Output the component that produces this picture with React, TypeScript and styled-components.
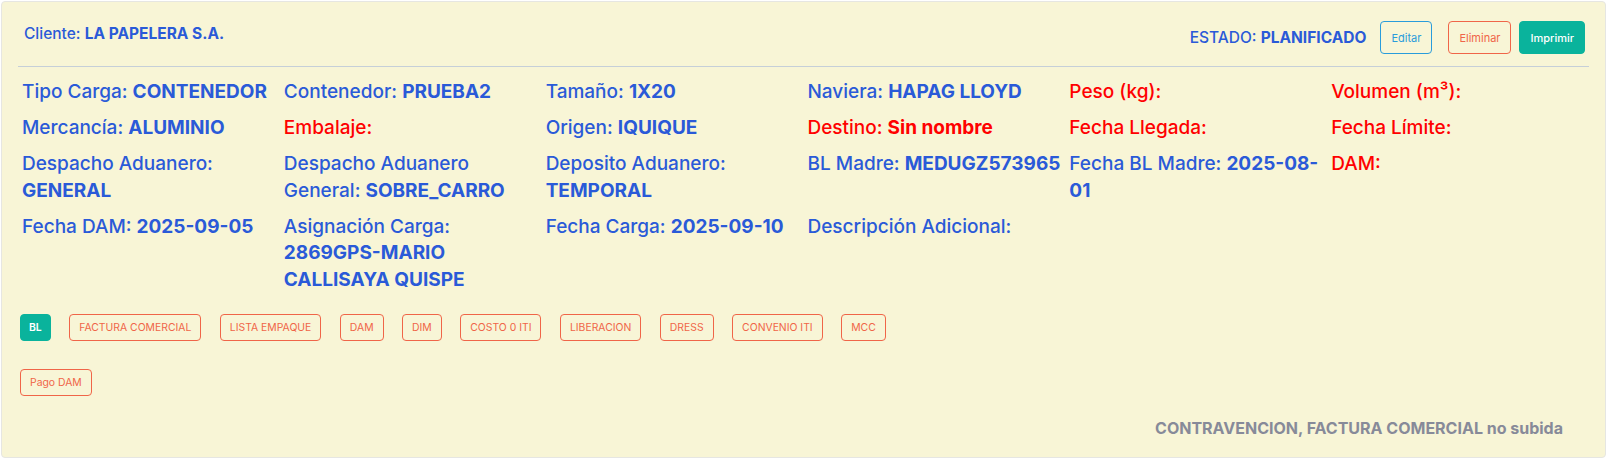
import React from "react";
import styled, { createGlobalStyle } from "styled-components";

const GlobalStyle = createGlobalStyle`
  html, body { margin: 0; padding: 0; background: #ffffff; }
  body { font-family: "Inter", "Noto Sans", sans-serif; }
  * { box-sizing: border-box; }
`;

const Card = styled.div`
  margin: 1px;
  border: 1px solid #e6e6e2;
  border-radius: 4px;
  background: #f8f5d6;
  padding: 19px 16px 18px 16px;
  height: 457px;
`;

const Header = styled.div`
  display: flex;
  justify-content: space-between;
  align-items: center;
  padding: 0 4px 12px 6px;
  border-bottom: 1px solid #c6cfd8;
`;

const HeaderText = styled.div<{ $up?: boolean }>`
  font-size: 15.5px;
  color: #2a5ad8;
  font-weight: 500;
  margin-top: ${(p) => (p.$up ? "-8px" : "0")};
  b { font-weight: 700; }
`;

const Actions = styled.div`
  display: flex;
  align-items: center;
`;

const ActionBtn = styled.button<{ $tone: string; $solid?: boolean; $ml: number }>`
  font-family: inherit;
  height: 33px;
  padding: 0 10px;
  margin-left: ${(p) => p.$ml}px;
  font-size: 11px;
  border-radius: 4px;
  border: 1px solid ${(p) => p.$tone};
  background: ${(p) => (p.$solid ? p.$tone : "transparent")};
  color: ${(p) => (p.$solid ? "#ffffff" : p.$tone)};
  font-weight: ${(p) => (p.$solid ? 500 : 400)};
`;

const Grid = styled.div`
  display: grid;
  grid-template-columns: repeat(6, 1fr);
  row-gap: 9.4px;
  margin-top: 12px;
`;

const Field = styled.div<{ $missing?: boolean }>`
  padding: 0 0 0 4px;
  font-size: 19px;
  line-height: 26.6px;
  font-weight: 500;
  color: ${(p) => (p.$missing ? "#ff0000" : "#2a5ad8")};
  b { font-weight: 700; }
`;

const TagRow = styled.div<{ $mt: number }>`
  display: flex;
  flex-wrap: wrap;
  gap: 18.5px;
  margin-top: ${(p) => p.$mt}px;
  padding-left: 2px;
`;

const Tag = styled.button<{ $done?: boolean }>`
  font-family: inherit;
  height: 27px;
  padding: 0 ${(p) => (p.$done ? 8 : 9)}px;
  font-size: 10.4px;
  border-radius: 4px;
  border: 1px solid ${(p) => (p.$done ? "#0ab39c" : "#f06548")};
  background: ${(p) => (p.$done ? "#0ab39c" : "transparent")};
  color: ${(p) => (p.$done ? "#ffffff" : "#f06548")};
  font-weight: ${(p) => (p.$done ? 600 : 400)};
`;

const Footer = styled.div`
  margin-top: 22px;
  padding-right: 26px;
  text-align: right;
  font-size: 16px;
  line-height: 20px;
  font-weight: 700;
  color: #878a99;
`;

type F = { label: string; value?: string };

const fields: F[] = [
  { label: "Tipo Carga", value: "CONTENEDOR" },
  { label: "Contenedor", value: "PRUEBA2" },
  { label: "Tamaño", value: "1X20" },
  { label: "Naviera", value: "HAPAG LLOYD" },
  { label: "Peso (kg)" },
  { label: "Volumen (m³)" },
  { label: "Mercancía", value: "ALUMINIO" },
  { label: "Embalaje" },
  { label: "Origen", value: "IQUIQUE" },
  { label: "Destino", value: "Sin nombre" },
  { label: "Fecha Llegada" },
  { label: "Fecha Límite" },
  { label: "Despacho Aduanero", value: "GENERAL" },
  { label: "Despacho Aduanero General", value: "SOBRE_CARRO" },
  { label: "Deposito Aduanero", value: "TEMPORAL" },
  { label: "BL Madre", value: "MEDUGZ573965" },
  { label: "Fecha BL Madre", value: "2025-08-01" },
  { label: "DAM" },
  { label: "Fecha DAM", value: "2025-09-05" },
  { label: "Asignación Carga", value: "2869GPS-MARIO CALLISAYA QUISPE" },
  { label: "Fecha Carga", value: "2025-09-10" },
  { label: "Descripción Adicional", value: "" },
];

const redLabels = new Set(["Peso (kg)", "Volumen (m³)", "Embalaje", "Destino", "Fecha Llegada", "Fecha Límite", "DAM"]);

const tags = ["FACTURA COMERCIAL", "LISTA EMPAQUE", "DAM", "DIM", "COSTO 0 ITI", "LIBERACION", "DRESS", "CONVENIO ITI", "MCC"];

export default function App() {
  return (
    <>
      <GlobalStyle />
      <Card>
        <Header>
          <HeaderText $up>
            Cliente: <b>LA PAPELERA S.A.</b>
          </HeaderText>
          <Actions>
            <HeaderText>
              ESTADO: <b>PLANIFICADO</b>
            </HeaderText>
            <ActionBtn $tone="#299cdb" $ml={14}>Editar</ActionBtn>
            <ActionBtn $tone="#f06548" $ml={16}>Eliminar</ActionBtn>
            <ActionBtn $tone="#0ab39c" $solid $ml={8}>Imprimir</ActionBtn>
          </Actions>
        </Header>
        <Grid>
          {fields.map((f) => (
            <Field key={f.label} $missing={redLabels.has(f.label)}>
              {f.label}:{f.value ? <> <b>{f.value}</b></> : null}
            </Field>
          ))}
        </Grid>
        <TagRow $mt={20.5}>
          <Tag $done>BL</Tag>
          {tags.map((t) => (
            <Tag key={t}>{t}</Tag>
          ))}
        </TagRow>
        <TagRow $mt={28}>
          <Tag>Pago DAM</Tag>
        </TagRow>
        <Footer>CONTRAVENCION, FACTURA COMERCIAL no subida</Footer>
      </Card>
    </>
  );
}
